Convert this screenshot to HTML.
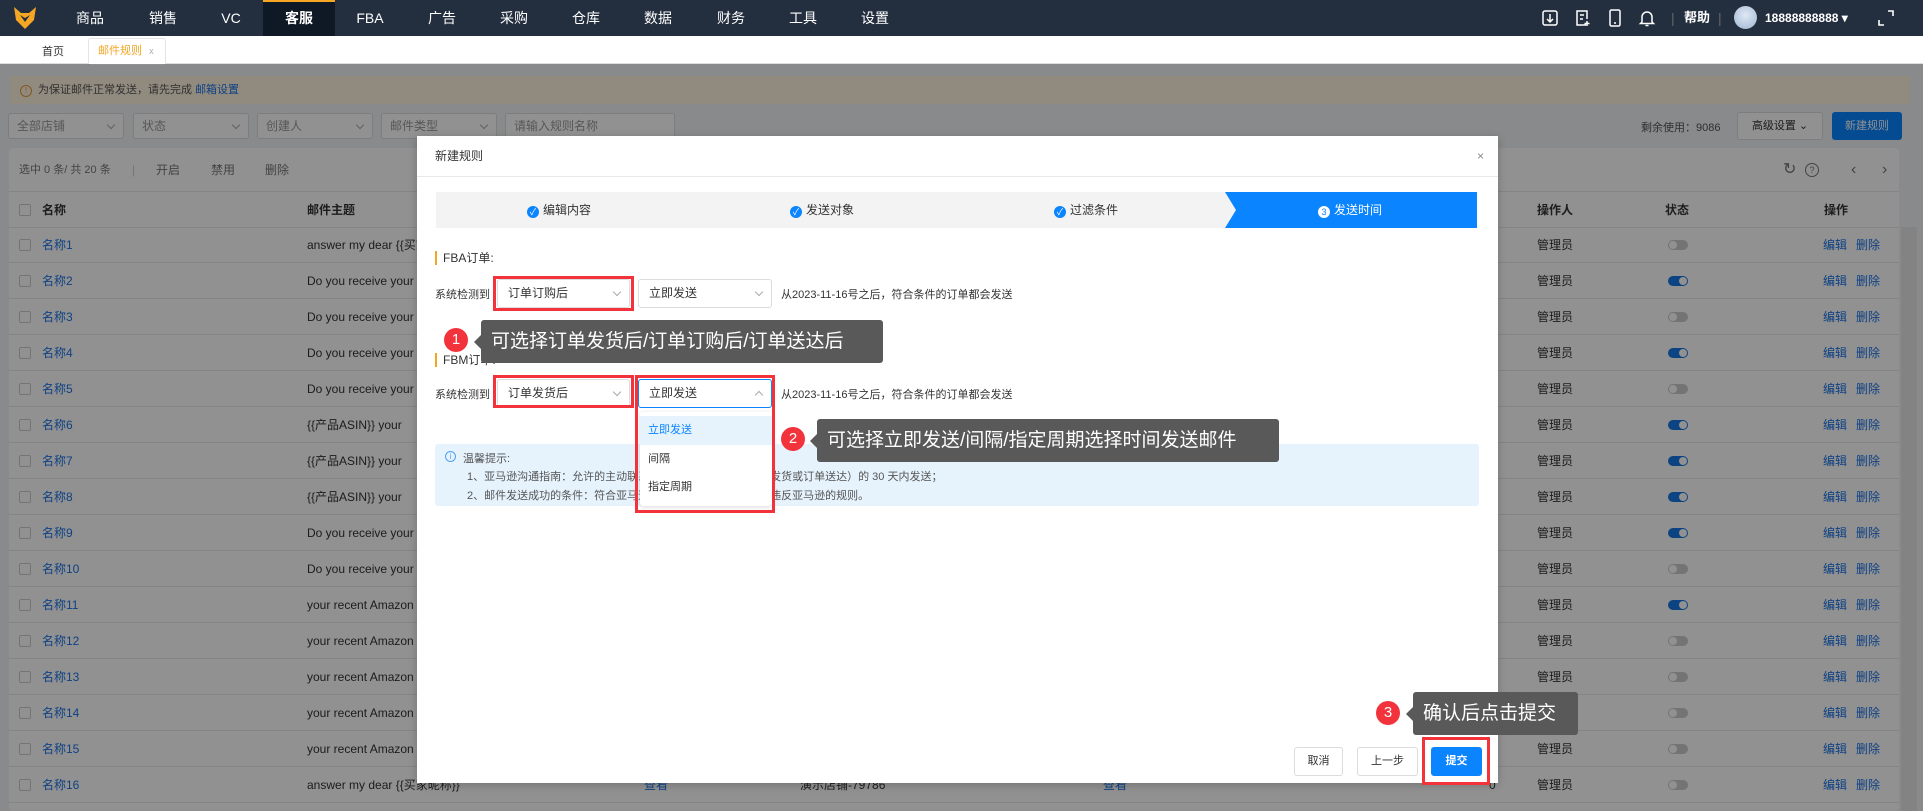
<!DOCTYPE html>
<html><head><meta charset="utf-8">
<style>
*{box-sizing:border-box;margin:0;padding:0}
body{width:1923px;height:811px;overflow:hidden;position:relative;background:#f0f2f5;font-family:"Liberation Sans","Noto Sans CJK SC",sans-serif;font-size:12px;color:#333}
.a{position:absolute;white-space:nowrap}
.nav{left:0;top:0;width:1923px;height:36px;background:#232e3f;color:#fff;font-size:14px}
.nav .it{position:absolute;top:0;height:36px;line-height:36px;transform:translateX(-50%)}
.tabs{left:0;top:36px;width:1923px;height:28px;background:#fff;border-bottom:1px solid #ddd}
.sel{position:absolute;height:26px;border:1px solid #dcdcdc;border-radius:3px;background:#fff;line-height:24px;padding-left:8px;color:#999}
.chev{position:absolute;right:9px;top:8px;width:6px;height:6px;border-right:1px solid #aaa;border-bottom:1px solid #aaa;transform:rotate(45deg)}
.row{position:absolute;left:9px;width:1890px;height:36px;border-bottom:1px solid #e8e8e8;line-height:36px}
.cb{position:absolute;left:10px;top:12px;width:12px;height:12px;border:1px solid #ccc;border-radius:2px;background:#fff}
.tg{position:absolute;left:1659px;top:13px;width:20px;height:10px;border-radius:5px;background:#ccc}
.tg.on{background:#1677e5}
.tg::after{content:"";position:absolute;top:1px;left:1px;width:8px;height:8px;border-radius:50%;background:#fff}
.tg.on::after{left:11px}
.lk{color:#1a73e8}
.ov{left:0;top:64px;width:1923px;height:747px;background:rgba(0,0,0,0.43)}
.modal{left:417px;top:136px;width:1081px;height:647px;background:#fff;box-shadow:0 2px 8px rgba(0,0,0,.2)}
.ms{position:absolute;height:29px;border:1px solid #dcdcdc;border-radius:3px;background:#fff;line-height:27px;padding-left:10px;color:#333}
.ms .chev{top:9px}
.red{position:absolute;border:3px solid #f2333c}
.tip{position:absolute;background:#595959;color:#fff;font-size:19px;border-radius:3px;padding-left:10px}
.tip::before{content:"";position:absolute;left:-7px;top:50%;margin-top:-7px;border:7px solid transparent;border-left:0;border-right-color:#595959}
.num{position:absolute;width:24px;height:24px;border-radius:50%;background:#f2333c;color:#fff;font-size:15px;text-align:center;line-height:24px}
.ck{display:inline-block;width:12px;height:12px;border-radius:50%;background:#0a84ff;color:#fff;font-size:9px;text-align:center;line-height:12px;vertical-align:-1px;margin-right:4px}
.btn{position:absolute;height:29px;border:1px solid #dcdcdc;border-radius:3px;background:#fff;text-align:center;line-height:27px;font-size:11px}
</style></head><body>
<!-- nav -->
<div class="a nav">
 <svg style="position:absolute;left:12px;top:6px" width="26" height="24" viewBox="0 0 26 24"><path d="M2 1 L9 7 L17 7 L24 1 L22 14 L13 23 L4 14 Z" fill="#f5a623"/><path d="M8 9 L13 16 L18 9 L13 12 Z" fill="#232e3f"/></svg>
 <div style="position:absolute;left:263px;top:0;width:72px;height:36px;background:#0f1825;border-top:2px solid #f5a623"></div>
 <span class="it" style="left:90px">商品</span><span class="it" style="left:163px">销售</span><span class="it" style="left:231px">VC</span><span class="it" style="left:299px;font-weight:bold">客服</span><span class="it" style="left:370px">FBA</span><span class="it" style="left:442px">广告</span><span class="it" style="left:514px">采购</span><span class="it" style="left:586px">仓库</span><span class="it" style="left:658px">数据</span><span class="it" style="left:731px">财务</span><span class="it" style="left:803px">工具</span><span class="it" style="left:875px">设置</span>
 <svg style="position:absolute;left:1541px;top:9px" width="18" height="18" viewBox="0 0 18 18" fill="none" stroke="#fff" stroke-width="1.5"><rect x="2" y="2" width="14" height="14" rx="2"/><path d="M9 5v8M6 10l3 3 3-3"/></svg>
 <svg style="position:absolute;left:1574px;top:9px" width="18" height="18" viewBox="0 0 18 18" fill="none" stroke="#fff" stroke-width="1.5"><path d="M12 16H3V2h10v8M6 6h4M6 10h3M13 12v5M10.5 14.5h5"/></svg>
 <svg style="position:absolute;left:1606px;top:8px" width="18" height="20" viewBox="0 0 18 20" fill="none" stroke="#fff" stroke-width="1.5"><rect x="4" y="2" width="10" height="16" rx="1.5"/><path d="M8 15h2"/></svg>
 <svg style="position:absolute;left:1638px;top:8px" width="18" height="20" viewBox="0 0 18 20" fill="none" stroke="#fff" stroke-width="1.5"><path d="M4 14V9a5 5 0 0 1 10 0v5l1.5 1.5h-13ZM7.5 17.5h3"/></svg>
 <span style="position:absolute;left:1671px;top:0;line-height:36px;color:#666">|</span>
 <span style="position:absolute;left:1684px;top:0;line-height:36px;font-size:13px;font-weight:bold">帮助</span>
 <span style="position:absolute;left:1718px;top:0;line-height:36px;color:#666">|</span>
 <div style="position:absolute;left:1734px;top:6px;width:23px;height:23px;border-radius:50%;background:radial-gradient(circle at 50% 40%,#dfe8f5,#9fb4d0)"></div>
 <span style="position:absolute;left:1765px;top:0;line-height:36px;font-size:12px;font-weight:bold">18888888888 ▾</span>
 <svg style="position:absolute;left:1877px;top:9px" width="18" height="18" viewBox="0 0 18 18" fill="none" stroke="#fff" stroke-width="1.6"><path d="M11 2h5v5M2 11v5h5"/></svg>
</div>
<div class="a tabs">
 <span style="position:absolute;left:42px;top:7px;font-size:11px">首页</span>
 <div style="position:absolute;left:88px;top:2px;width:78px;height:27px;border:1px solid #e4e4e4;border-bottom:0;background:#fff;border-radius:3px 3px 0 0;color:#f5a623;font-size:11px;line-height:24px;padding-left:9px">邮件规则 <span style="color:#aaa;font-size:9px;margin-left:4px">x</span></div>
</div>
<!-- page -->
<div class="a" style="left:10px;top:76px;width:1900px;height:28px;background:#fff3e0;line-height:28px;padding-left:10px;font-size:11px;color:#555"><span style="display:inline-block;width:12px;height:12px;border:1px solid #e89a3c;border-radius:50%;font-size:8px;line-height:10px;text-align:center;color:#e89a3c;margin-right:6px">!</span>为保证邮件正常发送，请先完成 <span style="color:#1a73e8">邮箱设置</span></div>
<div class="sel" style="left:8px;top:113px;width:116px">全部店铺<i class="chev"></i></div>
<div class="sel" style="left:133px;top:113px;width:116px">状态<i class="chev"></i></div>
<div class="sel" style="left:257px;top:113px;width:116px">创建人<i class="chev"></i></div>
<div class="sel" style="left:381px;top:113px;width:116px">邮件类型<i class="chev"></i></div>
<div class="sel" style="left:505px;top:113px;width:170px">请输入规则名称</div>
<span class="a" style="left:1641px;top:119px;font-size:11px;color:#555">剩余使用：9086</span>
<div class="btn" style="left:1737px;top:112px;width:86px;height:28px">高级设置 ⌄</div>
<div class="btn" style="left:1832px;top:112px;width:70px;height:28px;background:#0a84ff;color:#fff;border-color:#0a84ff">新建规则</div>
<div class="a" style="left:9px;top:148px;width:1890px;height:663px;background:#fff;border-radius:4px"></div>
<div class="a" style="left:9px;top:148px;width:1890px;height:44px;border-bottom:1px solid #e8e8e8;line-height:44px;color:#777">
 <span style="position:absolute;left:10px;font-size:11px">选中 0 条/ 共 20 条</span>
 <span style="position:absolute;left:123px;color:#ccc">|</span>
 <span style="position:absolute;left:147px">开启</span><span style="position:absolute;left:202px">禁用</span><span style="position:absolute;left:256px">删除</span>
 <span style="position:absolute;left:1774px;font-size:16px">↻</span><span style="position:absolute;left:1796px;top:15px;width:14px;height:14px;border:1px solid #777;border-radius:50%;line-height:12px;text-align:center;font-size:9px">?</span>
 <span style="position:absolute;left:1842px;font-size:16px">‹</span><span style="position:absolute;left:1873px;font-size:16px">›</span>
</div>
<div class="row" style="top:192px;font-weight:bold"><i class="cb"></i><span class="a" style="left:33px">名称</span><span class="a" style="left:298px">邮件主题</span><span class="a" style="left:1528px">操作人</span><span class="a" style="left:1656px">状态</span><span class="a" style="left:1815px">操作</span></div>
<div id="rows"></div>
<div class="a" style="left:1901px;top:227px;width:16px;height:584px;background:#e6e6e6"></div>
<div class="a ov"></div>
<!-- modal -->
<div class="a modal">
 <div style="position:absolute;left:0;top:0;width:1081px;height:41px;border-bottom:1px solid #e8e8e8;line-height:41px;padding-left:18px;font-size:12px">新建规则<span style="position:absolute;right:14px;color:#888">×</span></div>
 <div style="position:absolute;left:19px;top:56px;width:1041px;height:36px;background:#f3f3f3"></div>
 <svg style="position:absolute;left:808px;top:56px" width="252" height="36"><polygon points="0,0 252,0 252,36 0,36 11,18" fill="#0a84ff"/></svg>
 <div style="position:absolute;left:110px;top:56px;line-height:36px"><span class="ck">✓</span>编辑内容</div>
 <div style="position:absolute;left:373px;top:56px;line-height:36px"><span class="ck">✓</span>发送对象</div>
 <div style="position:absolute;left:637px;top:56px;line-height:36px"><span class="ck">✓</span>过滤条件</div>
 <div style="position:absolute;left:901px;top:56px;line-height:36px;color:#fff"><span class="ck" style="background:#fff;color:#0a84ff">3</span>发送时间</div>
 <div style="position:absolute;left:18px;top:115px;height:14px;border-left:2px solid #f5a623;padding-left:6px;line-height:14px">FBA订单:</div>
 <span class="a" style="left:18px;top:150px;font-size:11px">系统检测到</span>
 <div class="ms" style="left:80px;top:143px;width:133px">订单订购后<i class="chev"></i></div>
 <div class="ms" style="left:221px;top:143px;width:134px">立即发送<i class="chev"></i></div>
 <span class="a" style="left:364px;top:150px;font-size:11px">从2023-11-16号之后，符合条件的订单都会发送</span>
 <div style="position:absolute;left:18px;top:217px;height:14px;border-left:2px solid #f5a623;padding-left:6px;line-height:14px">FBM订单:</div>
 <span class="a" style="left:18px;top:250px;font-size:11px">系统检测到</span>
 <div class="ms" style="left:80px;top:243px;width:133px">订单发货后<i class="chev"></i></div>
 <div class="ms" style="left:221px;top:243px;width:134px;border-color:#0a84ff">立即发送<i class="chev" style="transform:rotate(-135deg);top:12px"></i></div>
 <span class="a" style="left:364px;top:250px;font-size:11px">从2023-11-16号之后，符合条件的订单都会发送</span>
 <div style="position:absolute;left:18px;top:308px;width:1044px;height:62px;background:#e6f3fd;border-radius:3px;font-size:11px;color:#555">
  <span style="position:absolute;left:10px;top:7px;width:11px;height:11px;border:1px solid #4da3f5;border-radius:50%;font-size:8px;line-height:9px;text-align:center;color:#4da3f5">i</span>
  <span class="a" style="left:28px;top:6px">温馨提示:</span>
  <span class="a" style="left:32px;top:24px">1、亚马逊沟通指南：允许的主动联系买家的时间范围为（订单发货或订单送达）的 30 天内发送；</span>
  <span class="a" style="left:32px;top:43px">2、邮件发送成功的条件：符合亚马逊沟通指南的要求，并且不违反亚马逊的规则。</span>
 </div>
 <div style="position:absolute;left:223px;top:276px;width:132px;height:94px;background:#fff;box-shadow:0 1px 5px rgba(0,0,0,.15);border-radius:3px;font-size:11px">
  <div style="margin-top:4px;height:29px;line-height:29px;padding-left:8px;background:#e6f3fd;color:#0a84ff">立即发送</div>
  <div style="height:28px;line-height:28px;padding-left:8px">间隔</div>
  <div style="height:28px;line-height:28px;padding-left:8px">指定周期</div>
 </div>
 <div class="btn" style="left:877px;top:611px;width:49px">取消</div>
 <div class="btn" style="left:940px;top:611px;width:61px">上一步</div>
 <div class="btn" style="left:1014px;top:611px;width:51px;background:#0a84ff;color:#fff;border-color:#0a84ff;font-weight:bold">提交</div>
</div>
<!-- annotations -->
<div class="red" style="left:493px;top:276px;width:141px;height:35px"></div>
<div class="red" style="left:493px;top:375px;width:141px;height:33px"></div>
<div class="red" style="left:635px;top:375px;width:140px;height:138px"></div>
<div class="red" style="left:1422px;top:737px;width:68px;height:48px"></div>
<div class="num" style="left:444px;top:328px">1</div>
<div class="tip" style="left:481px;top:320px;width:402px;height:43px;line-height:43px">可选择订单发货后/订单订购后/订单送达后</div>
<div class="num" style="left:781px;top:427px">2</div>
<div class="tip" style="left:817px;top:419px;width:462px;height:43px;line-height:43px">可选择立即发送/间隔/指定周期选择时间发送邮件</div>
<div class="num" style="left:1376px;top:701px">3</div>
<div class="tip" style="left:1413px;top:692px;width:165px;height:43px;line-height:43px">确认后点击提交</div>
<script>
var subj=["answer my dear {{买家昵称}}","Do you receive your","Do you receive your","Do you receive your","Do you receive your","{{产品ASIN}} your","{{产品ASIN}} your","{{产品ASIN}} your","Do you receive your","Do you receive your","your recent Amazon","your recent Amazon","your recent Amazon","your recent Amazon","your recent Amazon","answer my dear {{买家昵称}}"];
var on=[2,4,6,7,8,9,11];var h="";
for(var i=0;i<16;i++){var t=227+i*36;
h+='<div class="row" style="top:'+t+'px"><i class="cb"></i><span class="a lk" style="left:33px">名称'+(i+1)+'</span><span class="a" style="left:298px">'+subj[i]+'</span>'+(i==15?'<span class="a lk" style="left:635px">查看</span><span class="a" style="left:791px">演示店铺-79786</span><span class="a lk" style="left:1094px">查看</span><span class="a" style="left:1480px">0</span>':'')+'<span class="a" style="left:1528px">管理员</span><i class="tg'+(on.indexOf(i+1)>=0?' on':'')+'"></i><span class="a lk" style="left:1814px">编辑</span><span class="a lk" style="left:1847px">删除</span></div>';}
document.getElementById("rows").outerHTML=h;
</script>
</body></html>
